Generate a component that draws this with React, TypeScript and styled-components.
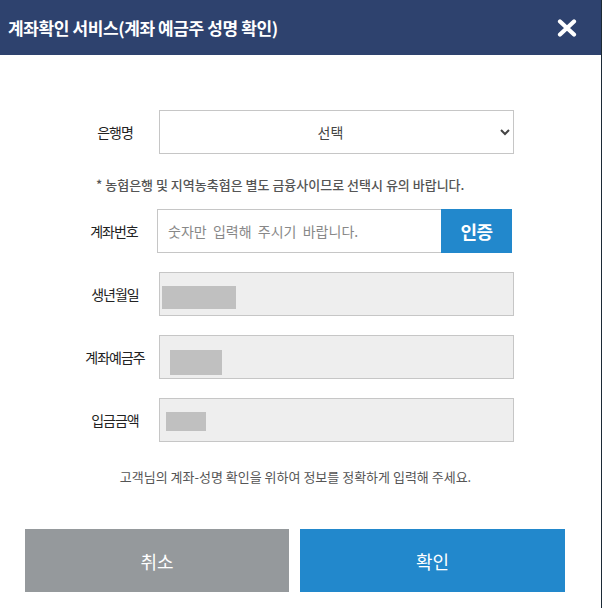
import styled, { createGlobalStyle } from "styled-components";

const GlobalStyle = createGlobalStyle`
  html, body {
    margin: 0;
    padding: 0;
    background: #1c2a36;
  }
  body {
    font-family: "Noto Sans CJK KR", "Noto Sans", sans-serif;
  }
`;

const Modal = styled.div`
  width: 601px;
  height: 608px;
  background: #ffffff;
  display: flex;
  flex-direction: column;
`;

const Header = styled.header`
  height: 55px;
  flex-shrink: 0;
  background: #2e426e;
  display: flex;
  align-items: center;
  justify-content: space-between;
  padding: 0 24px 0 8px;
`;

const Title = styled.h1`
  margin: 0;
  color: #ffffff;
  font-size: 17px;
  font-weight: 700;
  letter-spacing: -0.4px;
`;

const CloseButton = styled.button`
  border: none;
  background: transparent;
  padding: 0;
  width: 20px;
  height: 18px;
  display: flex;
  cursor: pointer;
`;

const Form = styled.div`
  padding-top: 55px;
  display: flex;
  flex-direction: column;
`;

const Row = styled.div<{ $gap?: number }>`
  display: grid;
  grid-template-columns: 88px 355px;
  height: 44px;
  padding-left: 71px;
  margin-top: ${({ $gap }) => $gap ?? 0}px;
`;

const AccountRow = styled(Row)`
  grid-template-columns: 86px 284px 71px;
`;

const Label = styled.label`
  display: flex;
  align-items: center;
  justify-content: center;
  color: #222;
  font-size: 14px;
  font-weight: 400;
  letter-spacing: -1px;
`;

const Select = styled.select`
  height: 44px;
  border: 1px solid #c6c6c6;
  background: #ffffff;
  color: #444;
  font-family: inherit;
  font-size: 14px;
  text-align: center;
  text-align-last: center;
  padding: 0 4px;
  outline: none;
`;

const Note = styled.p`
  margin: 0;
  padding: 21px 0 14px 96px;
  line-height: 20px;
  color: #555;
  font-size: 13px;
  font-weight: 500;
  letter-spacing: 0;
`;

const TextInput = styled.input`
  height: 44px;
  box-sizing: border-box;
  border: 1px solid #c6c6c6;
  border-right: none;
  padding: 0 10px;
  font-family: inherit;
  font-size: 14px;
  color: #333;
  outline: none;
  &::placeholder {
    color: #888;
  }
`;

const VerifyButton = styled.button`
  border: none;
  background: #2288cc;
  color: #ffffff;
  font-family: inherit;
  font-size: 18px;
  font-weight: 700;
  letter-spacing: -0.5px;
  padding: 0;
  cursor: pointer;
`;

const ReadonlyField = styled.div`
  box-sizing: border-box;
  height: 44px;
  border: 1px solid #c6c6c6;
  background: #eeeeee;
  display: flex;
  align-items: flex-start;
`;

const Redacted = styled.span<{ $w: number; $h: number; $left: number; $top: number }>`
  display: block;
  width: ${({ $w }) => $w}px;
  height: ${({ $h }) => $h}px;
  margin: ${({ $top }) => $top}px 0 0 ${({ $left }) => $left}px;
  background: #c0c0c0;
`;

const Info = styled.p`
  margin: 0;
  padding-top: 25px;
  line-height: 20px;
  text-align: center;
  padding-right: 10px;
  color: #555;
  font-size: 13px;
  letter-spacing: 0;
`;

const Actions = styled.div`
  display: grid;
  grid-template-columns: 264px 265px;
  gap: 11px;
  padding-left: 25px;
  margin-top: 42px;
`;

const ActionButton = styled.button<{ $primary?: boolean }>`
  height: 63px;
  border: none;
  background: ${({ $primary }) => ($primary ? "#2288cc" : "#95999c")};
  color: #ffffff;
  font-family: inherit;
  font-size: 18px;
  font-weight: 400;
  cursor: pointer;
`;

const fields = [
  { label: "생년월일", w: 74, h: 23, left: 2, top: 13 },
  { label: "계좌예금주", w: 52, h: 25, left: 10, top: 14 },
  { label: "입금금액", w: 40, h: 19, left: 6, top: 13 },
];

export default function App() {
  return (
    <>
      <GlobalStyle />
      <Modal>
        <Header>
          <Title>계좌확인 서비스(계좌 예금주 성명 확인)</Title>
          <CloseButton aria-label="닫기">
            <svg width="20" height="18" viewBox="0 0 20 18">
              <path
                d="M3 2.5 L17 15.5 M17 2.5 L3 15.5"
                stroke="#fff"
                strokeWidth="4.2"
                strokeLinecap="round"
              />
            </svg>
          </CloseButton>
        </Header>
        <Form>
          <Row>
            <Label>은행명</Label>
            <Select defaultValue="">
              <option value="">선택</option>
            </Select>
          </Row>
          <Note>* 농협은행 및 지역농축협은 별도 금융사이므로 선택시 유의 바랍니다.</Note>
          <AccountRow>
            <Label>계좌번호</Label>
            <TextInput placeholder="숫자만  입력해  주시기  바랍니다." />
            <VerifyButton>인증</VerifyButton>
          </AccountRow>
          {fields.map((f) => (
            <Row key={f.label} $gap={19}>
              <Label>{f.label}</Label>
              <ReadonlyField>
                <Redacted $w={f.w} $h={f.h} $left={f.left} $top={f.top} />
              </ReadonlyField>
            </Row>
          ))}
          <Info>고객님의 계좌-성명 확인을 위하여 정보를 정확하게 입력해 주세요.</Info>
          <Actions>
            <ActionButton>취소</ActionButton>
            <ActionButton $primary>확인</ActionButton>
          </Actions>
        </Form>
      </Modal>
    </>
  );
}
